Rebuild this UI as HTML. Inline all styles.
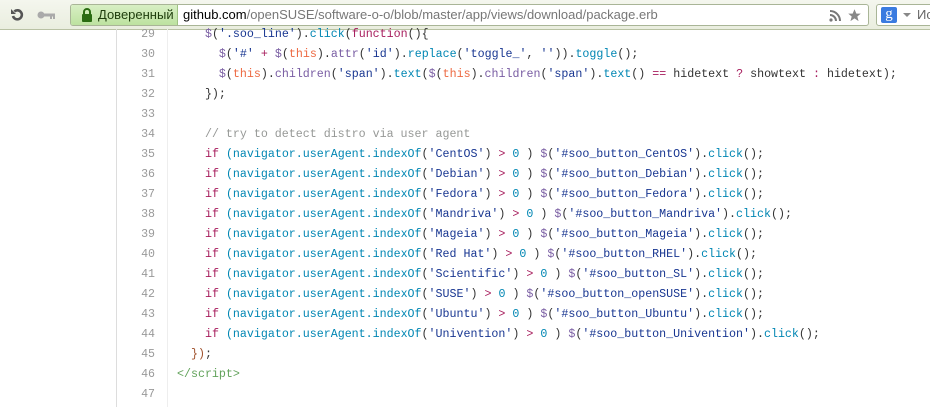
<!DOCTYPE html>
<html><head><meta charset="utf-8">
<style>
*{margin:0;padding:0;box-sizing:border-box}
body{width:930px;height:407px;overflow:hidden;background:#fff;font-family:"Liberation Sans",sans-serif;position:relative}
.tb{position:absolute;left:0;top:0;width:930px;height:30px;background:linear-gradient(#f4f6ee,#eaeedf);border-bottom:1px solid #b9c2a4}
.addr{position:absolute;left:70px;top:4px;width:799px;height:22px;border:1px solid #a9b597;border-radius:3px;background:#fff;overflow:hidden}
.sec{position:absolute;left:0;top:0;width:107px;height:20px;background:linear-gradient(#d8efc4,#bde2a0);border-right:1px solid #9fc283;font-size:13px;color:#1e3d0c;line-height:20px;padding-left:27px}
.url{position:absolute;left:112px;top:0;line-height:20px;font-size:13px;color:#777}
.url b{font-weight:normal;color:#000}
.srch{position:absolute;left:876px;top:4px;width:70px;height:22px;border:1px solid #a9b597;border-radius:3px;background:#fff}
.vl{position:absolute;left:116px;top:29px;width:1px;height:378px;background:#ddd}
.gl{position:absolute;left:167px;top:29px;width:1px;height:378px;background:#eee}
.ln{position:absolute;left:117px;width:38px;text-align:right;color:#999;font-family:"Liberation Mono",monospace;font-size:11.6px;line-height:20px}
.cd{position:absolute;left:177px;white-space:pre;font-family:"Liberation Mono",monospace;font-size:11.65px;line-height:20px;color:#333}
.k{color:#a71d5d}.s{color:#183691}.f{color:#0086b3}.p{color:#795da3}.t{color:#ed6a43}.c{color:#969896}.g{color:#63a35c}
</style></head><body>
<div class="tb">
<svg style="position:absolute;left:9px;top:7px" width="16" height="16" viewBox="0 0 16 16"><path d="M4 9a4.5 4.5 0 1 0 1.3-4.5" fill="none" stroke="#555" stroke-width="2.6"/><path d="M2 2v5h5z" fill="#555"/></svg>
<svg style="position:absolute;left:37px;top:10px" width="20" height="10" viewBox="0 0 20 10"><circle cx="4" cy="5" r="3.5" fill="#aaa"/><rect x="6" y="3.5" width="12" height="3" fill="#aaa"/><rect x="13" y="6" width="2" height="3" fill="#aaa"/><rect x="16" y="6" width="2" height="3" fill="#aaa"/></svg>
<div class="addr"><div class="sec">Доверенный</div>
<svg style="position:absolute;left:10px;top:3px" width="12" height="14" viewBox="0 0 12 14"><path d="M3 6V4a3 3 0 0 1 6 0v2" fill="none" stroke="#2a6b12" stroke-width="2"/><rect x="1" y="6" width="10" height="8" rx="1" fill="#2a6b12"/></svg>
<div class="url"><b>github.com</b>/openSUSE/software-o-o/blob/master/app/views/download/package.erb</div>
<svg style="position:absolute;left:758px;top:5px" width="12" height="12" viewBox="0 0 12 12"><circle cx="2" cy="10" r="1.6" fill="#777"/><path d="M1 5a6 6 0 0 1 6 6M1 1a10 10 0 0 1 10 10" fill="none" stroke="#777" stroke-width="2"/></svg>
<svg style="position:absolute;left:776px;top:3px" width="15" height="15" viewBox="0 0 24 24"><path d="M12 2l3 7h7l-5.5 4.5 2 7.5-6.5-4.5-6.5 4.5 2-7.5L2 9h7z" fill="#888"/></svg>
</div>
<div class="srch"><div style="position:absolute;left:4px;top:2px;width:16px;height:16px;background:#3a7be0;border-radius:2px;color:#fff;font-family:'Liberation Serif',serif;font-size:15px;line-height:15px;text-align:center">g</div>
<div style="position:absolute;left:26px;top:8px;border:4px solid transparent;border-top:4px solid #888"></div>
<div style="position:absolute;left:40px;top:2px;font-size:13px;color:#666">Ис</div></div>
</div>
<div class="vl"></div><div class="gl"></div>
<div class="ln" style="top:25px">29<br>30<br>31<br>32<br>33<br>34<br>35<br>36<br>37<br>38<br>39<br>40<br>41<br>42<br>43<br>44<br>45<br>46<br>47</div>
<div class="cd" style="top:25px">    <span class="p">$</span>(<span class="s">'.soo_line'</span>).<span class="f">click</span>(<span class="k">function</span>(){
      <span class="p">$</span>(<span class="s">'#'</span> <span class="k">+</span> <span class="p">$</span>(<span class="t">this</span>).<span class="p">attr</span>(<span class="s">'id'</span>).<span class="f">replace</span>(<span class="s">'toggle_'</span>, <span class="s">''</span>)).<span class="f">toggle</span>();
      <span class="p">$</span>(<span class="t">this</span>).<span class="p">children</span>(<span class="s">'span'</span>).<span class="f">text</span>(<span class="p">$</span>(<span class="t">this</span>).<span class="p">children</span>(<span class="s">'span'</span>).<span class="f">text</span>() <span class="k">==</span> hidetext <span class="k">?</span> showtext <span class="k">:</span> hidetext);
    });

    <span class="c">// try to detect distro via user agent</span>
    <span class="k">if</span> <span class="f">(navigator.userAgent.indexOf</span>(<span class="s">'CentOS'</span>) <span class="k">&gt;</span> <span class="f">0</span> ) <span class="p">$</span>(<span class="s">'#soo_button_CentOS'</span>).<span class="f">click</span>();
    <span class="k">if</span> <span class="f">(navigator.userAgent.indexOf</span>(<span class="s">'Debian'</span>) <span class="k">&gt;</span> <span class="f">0</span> ) <span class="p">$</span>(<span class="s">'#soo_button_Debian'</span>).<span class="f">click</span>();
    <span class="k">if</span> <span class="f">(navigator.userAgent.indexOf</span>(<span class="s">'Fedora'</span>) <span class="k">&gt;</span> <span class="f">0</span> ) <span class="p">$</span>(<span class="s">'#soo_button_Fedora'</span>).<span class="f">click</span>();
    <span class="k">if</span> <span class="f">(navigator.userAgent.indexOf</span>(<span class="s">'Mandriva'</span>) <span class="k">&gt;</span> <span class="f">0</span> ) <span class="p">$</span>(<span class="s">'#soo_button_Mandriva'</span>).<span class="f">click</span>();
    <span class="k">if</span> <span class="f">(navigator.userAgent.indexOf</span>(<span class="s">'Mageia'</span>) <span class="k">&gt;</span> <span class="f">0</span> ) <span class="p">$</span>(<span class="s">'#soo_button_Mageia'</span>).<span class="f">click</span>();
    <span class="k">if</span> <span class="f">(navigator.userAgent.indexOf</span>(<span class="s">'Red Hat'</span>) <span class="k">&gt;</span> <span class="f">0</span> ) <span class="p">$</span>(<span class="s">'#soo_button_RHEL'</span>).<span class="f">click</span>();
    <span class="k">if</span> <span class="f">(navigator.userAgent.indexOf</span>(<span class="s">'Scientific'</span>) <span class="k">&gt;</span> <span class="f">0</span> ) <span class="p">$</span>(<span class="s">'#soo_button_SL'</span>).<span class="f">click</span>();
    <span class="k">if</span> <span class="f">(navigator.userAgent.indexOf</span>(<span class="s">'SUSE'</span>) <span class="k">&gt;</span> <span class="f">0</span> ) <span class="p">$</span>(<span class="s">'#soo_button_openSUSE'</span>).<span class="f">click</span>();
    <span class="k">if</span> <span class="f">(navigator.userAgent.indexOf</span>(<span class="s">'Ubuntu'</span>) <span class="k">&gt;</span> <span class="f">0</span> ) <span class="p">$</span>(<span class="s">'#soo_button_Ubuntu'</span>).<span class="f">click</span>();
    <span class="k">if</span> <span class="f">(navigator.userAgent.indexOf</span>(<span class="s">'Univention'</span>) <span class="k">&gt;</span> <span class="f">0</span> ) <span class="p">$</span>(<span class="s">'#soo_button_Univention'</span>).<span class="f">click</span>();
  <span style="color:#a0522d">})</span>;
<span class="g">&lt;/script&gt;</span>
</div>
</body></html>
